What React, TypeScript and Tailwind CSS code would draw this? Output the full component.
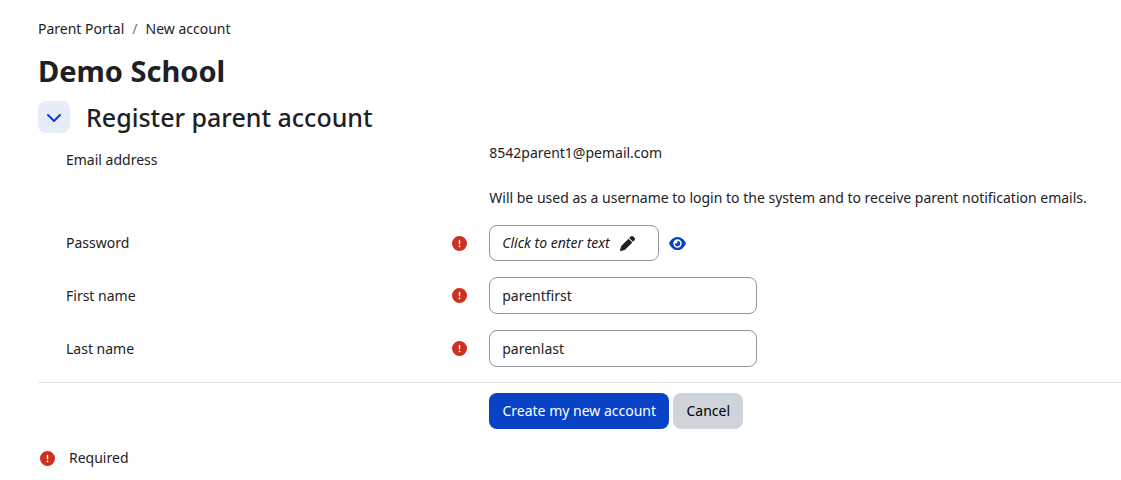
import { useState, type ReactNode } from "react"
import { FaChevronDown, FaCircleExclamation, FaEye, FaPen } from "react-icons/fa6"

const inputClass =
  "h-[37px] w-[268px] rounded-lg border border-[#8f959e] bg-white px-3 text-[#1d2125] outline-none focus:border-[#0f6cbf]"

function RequiredIcon() {
  return <FaCircleExclamation className="size-[15px] text-[#ca3120]" role="img" aria-label="Required" />
}

// One label / control pair
function FormRow({ label, htmlFor, children }: { label: string; htmlFor: string; children: ReactNode }) {
  return (
    <div className="flex items-center">
      <div className="flex w-5/12 shrink-0 items-center justify-between pr-[22px] pl-7">
        <label htmlFor={htmlFor}>{label}</label>
        <RequiredIcon />
      </div>
      <div className="flex grow items-center">{children}</div>
    </div>
  )
}

export default function App() {
  const [open, setOpen] = useState(true)
  const [editing, setEditing] = useState(false)
  const [reveal, setReveal] = useState(false)
  const [password, setPassword] = useState("")
  const [firstName, setFirstName] = useState("parentfirst")
  const [lastName, setLastName] = useState("parenlast")

  return (
    <main className="bg-white pt-[18px] pb-3 pl-[38px] font-['Noto_Sans','Open_Sans',sans-serif] text-sm leading-[22px] text-[#1d2125]">
      <nav aria-label="Breadcrumb">
        <ol className="flex gap-2">
          <li>
            <a href="#portal">Parent Portal</a>
          </li>
          <li aria-hidden="true" className="text-[#6a737b]">
            /
          </li>
          <li>
            <a href="#new">New account</a>
          </li>
        </ol>
      </nav>

      <h1 className="mt-[11px] text-[29px] leading-10 font-bold">Demo School</h1>

      <form onSubmit={(e) => e.preventDefault()}>
        <div className="mt-2.5 flex items-center gap-4">
          <button
            type="button"
            aria-label="Toggle section"
            aria-expanded={open}
            onClick={() => setOpen(!open)}
            className="flex size-8 items-center justify-center rounded-lg bg-[#e6ecf9] text-[#0843c7]"
          >
            <FaChevronDown className={open ? "size-4" : "size-4 -rotate-90"} />
          </button>
          <h2 className="text-[25px] leading-8 font-medium">Register parent account</h2>
        </div>

        {open && (
          <div className="mt-[9px] flex flex-col gap-4">
            <div className="flex">
              <div className="w-5/12 shrink-0 pt-[7px] pl-7">Email address</div>
              <div className="grow">
                <p>8542parent1@pemail.com</p>
                <p className="mt-[23px]">
                  Will be used as a username to login to the system and to receive parent notification emails.
                </p>
              </div>
            </div>

            <FormRow label="Password" htmlFor="password">
              {editing ? (
                <input
                  id="password"
                  autoFocus
                  type={reveal ? "text" : "password"}
                  value={password}
                  onChange={(e) => setPassword(e.target.value)}
                  className={inputClass}
                />
              ) : (
                <button
                  id="password"
                  type="button"
                  onClick={() => setEditing(true)}
                  className="flex h-9 w-[170px] items-center gap-2.5 rounded-lg border border-[#8f959e] px-3 whitespace-nowrap"
                >
                  <em>Click to enter text</em>
                  <FaPen className="size-[15px] shrink-0" />
                </button>
              )}
              <button
                type="button"
                aria-label="Reveal"
                onClick={() => setReveal(!reveal)}
                className="ml-2.5 text-[#0843c7]"
              >
                <FaEye className="h-[15px] w-[17px]" />
              </button>
            </FormRow>

            <FormRow label="First name" htmlFor="firstname">
              <input
                id="firstname"
                type="text"
                value={firstName}
                onChange={(e) => setFirstName(e.target.value)}
                className={inputClass}
              />
            </FormRow>

            <FormRow label="Last name" htmlFor="lastname">
              <input
                id="lastname"
                type="text"
                value={lastName}
                onChange={(e) => setLastName(e.target.value)}
                className={inputClass}
              />
            </FormRow>
          </div>
        )}

        <div className="mt-[15px] flex gap-1 border-t border-[#dee2e6] pt-2.5 pl-[41.6667%]">
          <button type="submit" className="h-9 w-[180px] rounded-lg bg-[#0843c7] whitespace-nowrap text-white">
            Create my new account
          </button>
          <button type="button" className="h-9 w-[70px] rounded-lg bg-[#ced4da] text-black">
            Cancel
          </button>
        </div>
      </form>

      <div className="mt-[18px] flex items-center gap-3.5 pl-0.5">
        <RequiredIcon />
        <span>Required</span>
      </div>
    </main>
  )
}
